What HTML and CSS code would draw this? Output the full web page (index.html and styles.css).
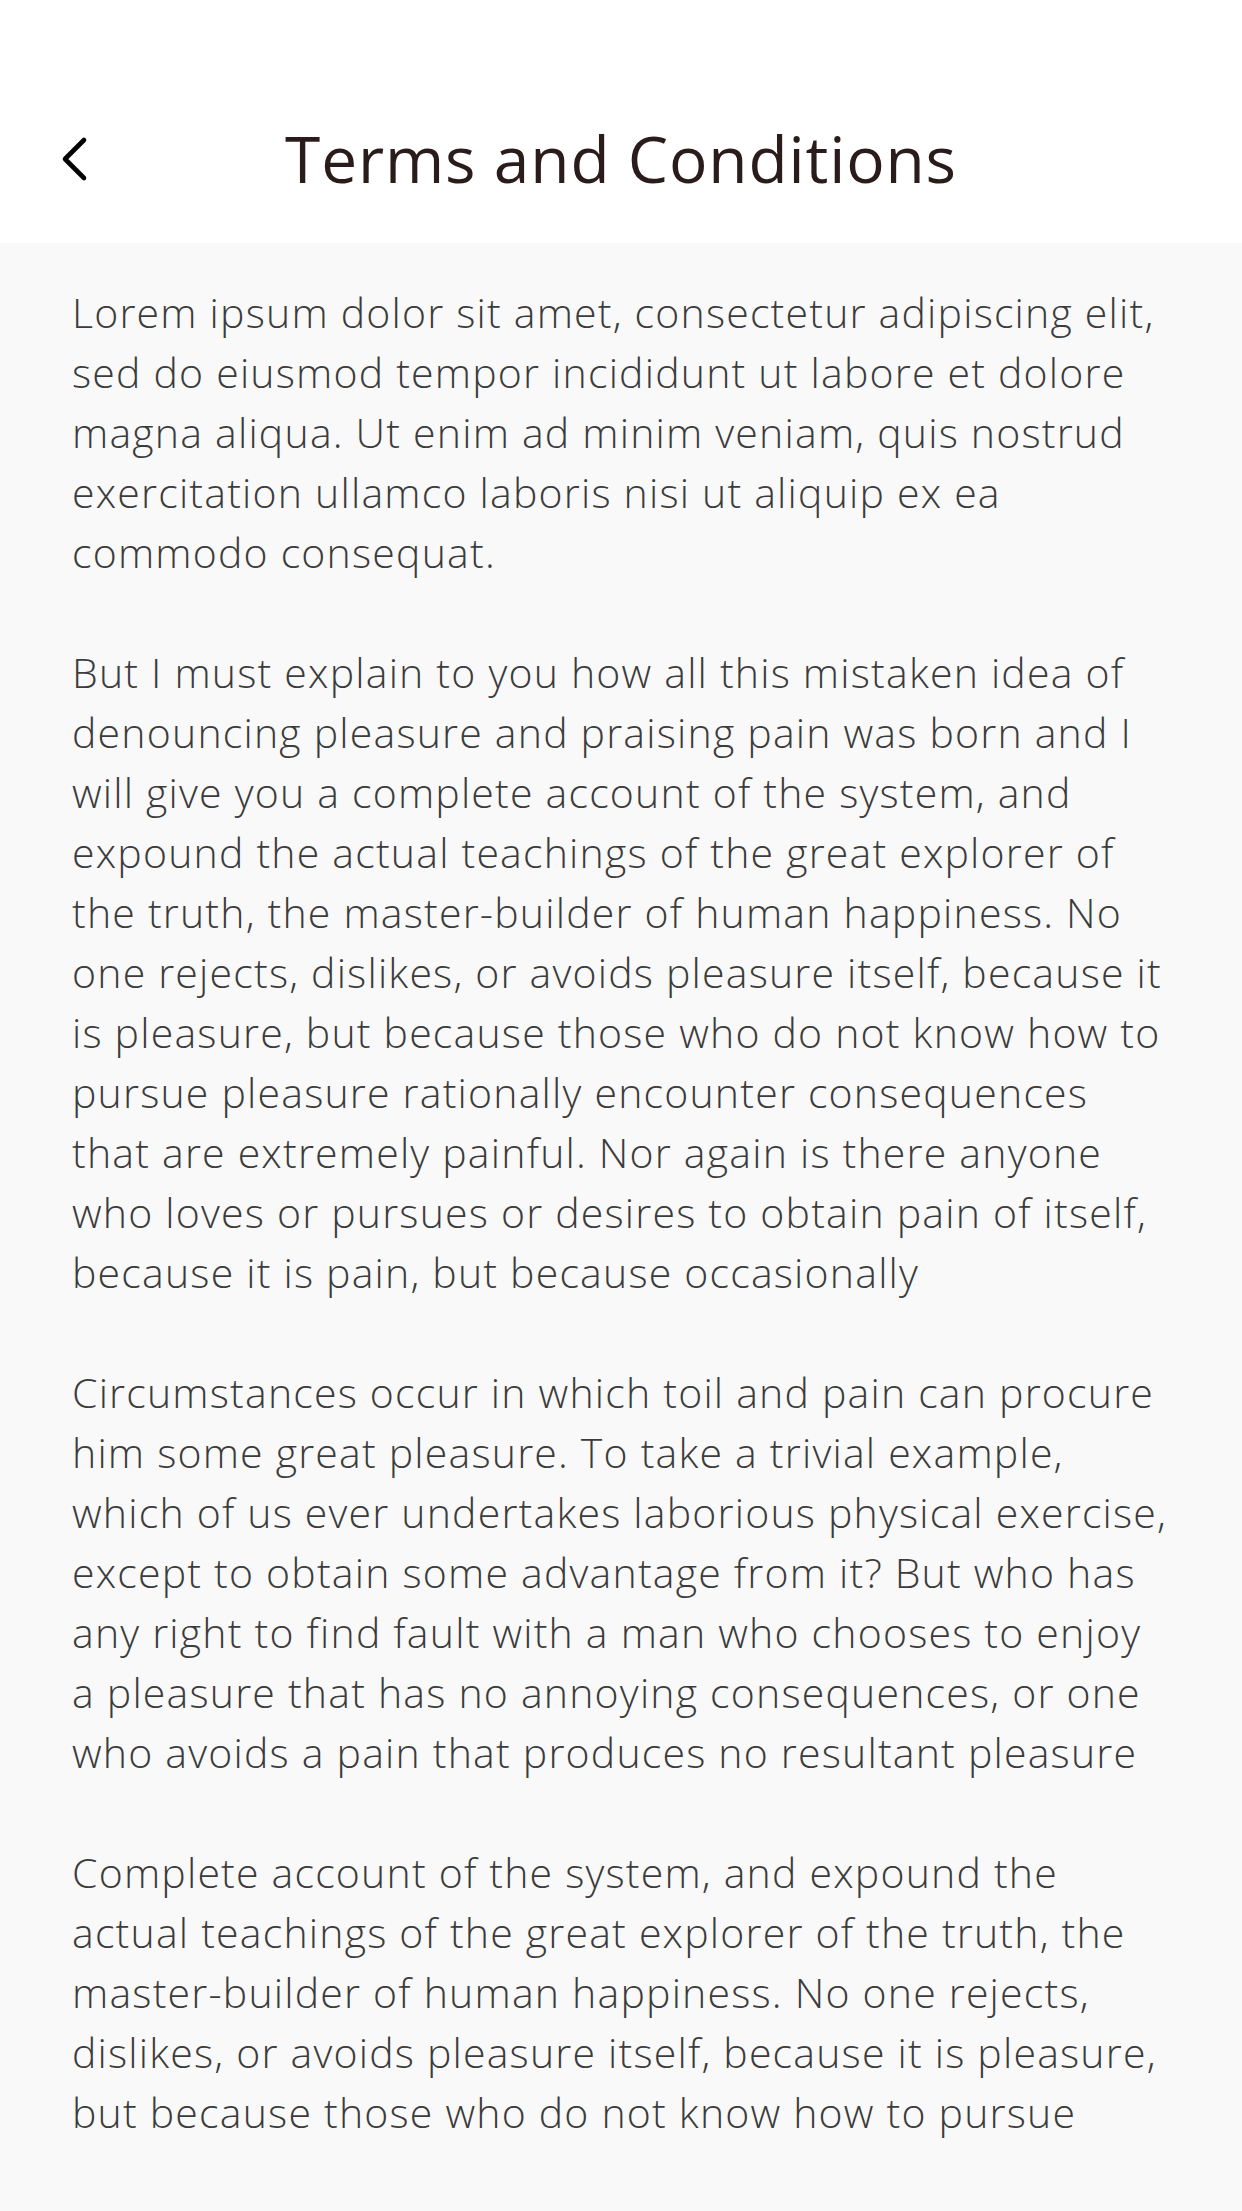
FILE: index.html
```html
<!DOCTYPE html>
<html lang="en">
<head>
<meta charset="utf-8">
<title>Terms and Conditions</title>
<link rel="stylesheet" href="styles.css">
</head>
<body>
<div class="screen">
  <header class="topbar">
    <button class="back" aria-label="Back">
      <svg width="30" height="46" viewBox="0 0 30 46" aria-hidden="true"><polyline points="24,4 5,23 24,42" fill="none" stroke="#000" stroke-width="4.6" stroke-linecap="round" stroke-linejoin="round"/></svg>
    </button>
    <h1 class="title">Terms and Conditions</h1>
  </header>
  <main class="content">
    <p>Lorem ipsum dolor sit amet, consectetur adipiscing elit, sed do eiusmod tempor incididunt ut labore et dolore magna aliqua. Ut enim ad minim veniam, quis nostrud exercitation ullamco laboris nisi ut aliquip ex ea commodo consequat.</p>
    <p>But I must explain to you how all this mistaken idea of denouncing pleasure and praising pain was born and I will give you a complete account of the system, and expound the actual teachings of the great explorer of the truth, the master-builder of human happiness. No one rejects, dislikes, or avoids pleasure itself, because it is pleasure, but because those who do not know how to pursue pleasure rationally encounter consequences that are extremely painful. Nor again is there anyone who loves or pursues or desires to obtain pain of itself, because it is pain, but because occasionally</p>
    <p>Circumstances occur in which toil and pain can procure him some great pleasure. To take a trivial example, which of us ever undertakes laborious physical exercise, except to obtain some advantage from it? But who has any right to find fault with a man who chooses to enjoy a pleasure that has no annoying consequences, or one who avoids a pain that produces no resultant pleasure</p>
    <p>Complete account of the system, and expound the actual teachings of the great explorer of the truth, the master-builder of human happiness. No one rejects, dislikes, or avoids pleasure itself, because it is pleasure, but because those who do not know how to pursue</p>
  </main>
</div>
</body>
</html>
```
FILE: styles.css
```css
html, body {
  margin: 0;
  padding: 0;
  background: #f9f9f9;
}

.screen {
  min-height: 2211px;
  background: #f9f9f9;
  font-family: "Open Sans", "Noto Sans", sans-serif;
}

.topbar {
  position: relative;
  background: #ffffff;
  height: 243px;
  box-sizing: border-box;
  padding-top: 119px;
}

.back {
  position: absolute;
  left: 60px;
  top: 136px;
  width: 30px;
  height: 46px;
  padding: 0;
  border: 0;
  background: none;
  display: flex;
}

.title {
  margin: 0;
  text-align: center;
  font-size: 64px;
  line-height: 80px;
  font-weight: 400;
  letter-spacing: 0.85px;
  color: #2b1c1c;
}

.content {
  padding: 39px 72px 0 72px;
  color: #3c3c3c;
  font-size: 41px;
  font-weight: 300;
  line-height: 60px;
  letter-spacing: 1.2px;
}

.content p {
  margin: 0 0 60px 0;
}
```
